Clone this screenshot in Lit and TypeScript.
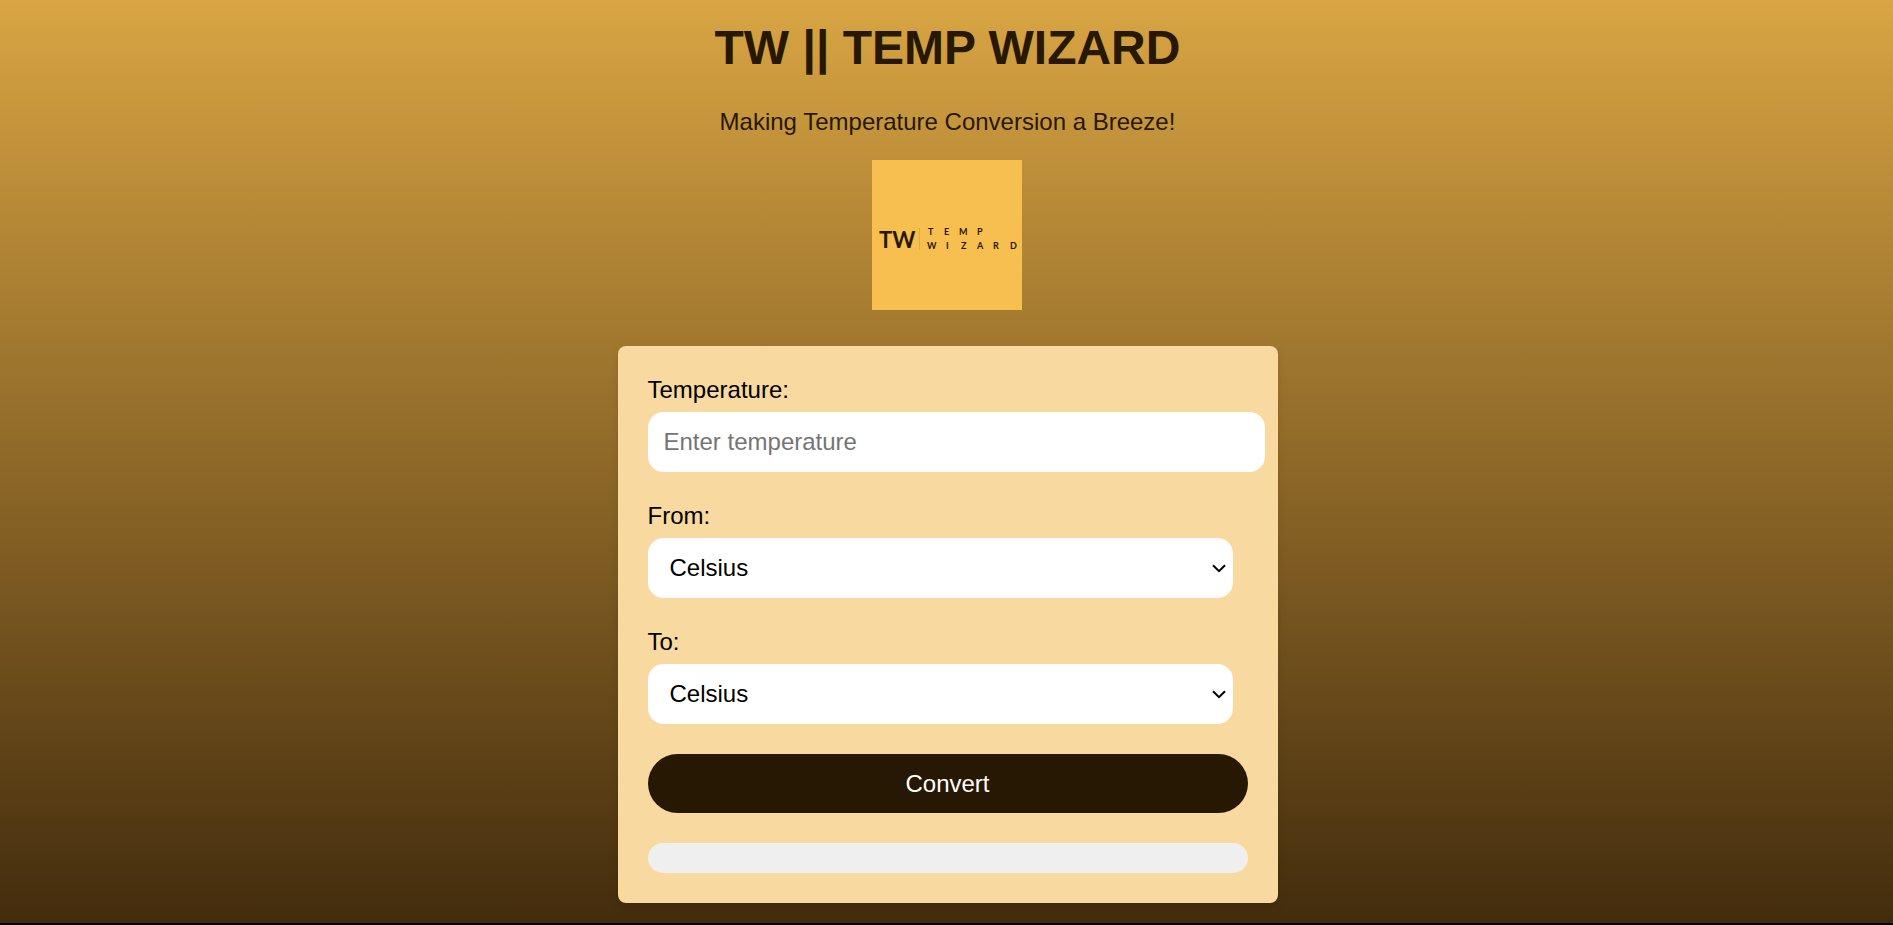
import { LitElement, html, css } from "lit";
import { customElement, state } from "lit/decorators.js";

const UNITS = ["Celsius", "Fahrenheit", "Kelvin"];

@customElement("tw-logo")
class TwLogo extends LitElement {
  static styles = css`
    :host {
      display: block;
      width: 150px;
      height: 150px;
    }
    svg {
      display: block;
      width: 100%;
      height: 100%;
      font-family: Lato, "Open Sans", sans-serif;
      font-weight: 700;
      fill: #271803;
    }
    .mark {
      font-size: 22px;
    }
    .name {
      font-size: 9px;
    }
  `;

  render() {
    return html`
      <svg viewBox="0 0 150 150" role="img" aria-label="Temp Wizard logo">
        <rect width="150" height="150" fill="#f7bf50" />
        <text class="mark" x="7" y="88">TW</text>
        <rect x="47" y="68" width="1" height="22" fill="#dfac49" />
        <text class="name" x="56 72 87 105" y="75">TEMP</text>
        <text class="name" x="55 74 89 105 121 138" y="89">WIZARD</text>
      </svg>
    `;
  }
}

@customElement("app-root")
class AppRoot extends LitElement {
  static styles = css`
    :host {
      display: block;
      min-height: 100vh;
      background: #000;
      color: #000;
      font-family: Arial, "Liberation Sans", sans-serif;
      font-size: 24px;
      line-height: 28px;
    }
    .page {
      display: flex;
      flex-direction: column;
      align-items: center;
      padding: 20px 20px 20px 22px;
      background: linear-gradient(#d9a543, #432c0d);
    }
    header {
      display: flex;
      flex-direction: column;
      align-items: center;
      color: #271803;
      text-align: center;
    }
    h1 {
      margin: 0 0 32px;
      font-size: 48px;
      line-height: 56px;
    }
    .tagline {
      margin: 0 0 24px;
    }
    .card {
      box-sizing: border-box;
      width: 100%;
      max-width: 660px;
      margin-top: 36px;
      padding: 30px;
      border-radius: 8px;
      background: #f8d9a0;
      box-shadow: 0 4px 8px rgba(0, 0, 0, 0.1);
    }
    form {
      display: flex;
      flex-direction: column;
      gap: 30px;
    }
    .field {
      display: flex;
      flex-direction: column;
      gap: 8px;
    }
    input,
    select {
      border: 1px solid #fff;
      border-radius: 15px;
      background-color: #fff;
      color: #000;
      font: inherit;
    }
    input {
      box-sizing: content-box;
      width: 97.5%;
      height: 28px;
      padding: 15px;
      appearance: textfield;
    }
    input::placeholder {
      color: #757575;
    }
    select {
      box-sizing: border-box;
      width: 97.5%;
      height: 60px;
      padding: 0 30px 0 21px;
      appearance: none;
      background-image: url("data:image/svg+xml,%3Csvg xmlns='http://www.w3.org/2000/svg' width='14' height='9' viewBox='0 0 14 9'%3E%3Cpath d='M1 1.2 7 7.2 13 1.2' fill='none' stroke='%23000' stroke-width='2'/%3E%3C/svg%3E");
      background-repeat: no-repeat;
      background-position: right 6px center;
    }
    button {
      height: 59px;
      padding: 0;
      border: 0;
      border-radius: 30px;
      background: #271803;
      color: #fff;
      font: inherit;
      cursor: pointer;
    }
    output {
      display: block;
      min-height: 30px;
      border-radius: 15px;
      background: #efefef;
      text-align: center;
    }
  `;

  @state() private result = "";

  private convert(e: Event) {
    e.preventDefault();
    const data = new FormData(e.target as HTMLFormElement);
    const raw = String(data.get("temperature") ?? "");
    const value = Number(raw);
    if (raw === "" || Number.isNaN(value)) {
      this.result = "";
      return;
    }
    const from = data.get("from");
    const to = data.get("to");
    const celsius =
      from === "Fahrenheit" ? ((value - 32) * 5) / 9 : from === "Kelvin" ? value - 273.15 : value;
    const converted =
      to === "Fahrenheit" ? (celsius * 9) / 5 + 32 : to === "Kelvin" ? celsius + 273.15 : celsius;
    this.result = `${converted.toFixed(2)} ${to}`;
  }

  private unitField(id: string, label: string) {
    return html`
      <div class="field">
        <label for=${id}>${label}</label>
        <select id=${id} name=${id}>
          ${UNITS.map((u) => html`<option value=${u}>${u}</option>`)}
        </select>
      </div>
    `;
  }

  render() {
    return html`
      <div class="page">
        <header>
          <h1>TW || TEMP WIZARD</h1>
          <p class="tagline">Making Temperature Conversion a Breeze!</p>
          <tw-logo></tw-logo>
        </header>
        <main class="card">
          <form @submit=${this.convert}>
            <div class="field">
              <label for="temperature">Temperature:</label>
              <input
                id="temperature"
                name="temperature"
                type="number"
                step="any"
                placeholder="Enter temperature"
              />
            </div>
            ${this.unitField("from", "From:")} ${this.unitField("to", "To:")}
            <button type="submit">Convert</button>
            <output for="temperature from to">${this.result}</output>
          </form>
        </main>
      </div>
    `;
  }
}
